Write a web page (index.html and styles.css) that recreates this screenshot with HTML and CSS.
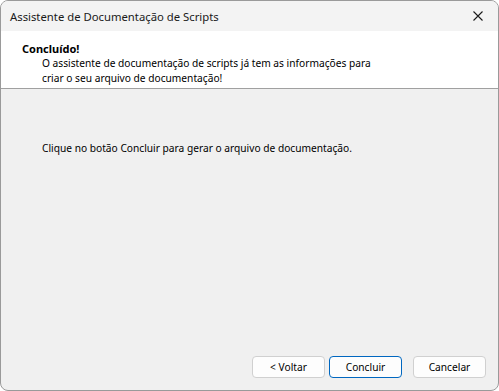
FILE: index.html
```html
<!DOCTYPE html>
<html>
<head>
<meta charset="utf-8">
<link rel="stylesheet" href="styles.css">
</head>
<body>
<div class="window">
  <div class="titlebar">
    <span class="title">Assistente de Documentação de Scripts</span>
    <span class="close">
      <svg width="10" height="10" viewBox="0 0 10 10"><path d="M0.5 0.5 L9.5 9.5 M9.5 0.5 L0.5 9.5" stroke="#1a1a1a" stroke-width="1.1" fill="none"/></svg>
    </span>
  </div>
  <div class="header">
    <div class="heading">Concluído!</div>
    <div class="subtext">O assistente de documentação de scripts já tem as informações para<br>criar o seu arquivo de documentação!</div>
  </div>
  <div class="body">
    <p class="message">Clique no botão Concluir para gerar o arquivo de documentação.</p>
    <div class="buttons">
      <button class="btn">&lt; Voltar</button>
      <button class="btn primary">Concluir</button>
      <button class="btn cancel">Cancelar</button>
    </div>
  </div>
</div>
</body>
</html>
```
FILE: styles.css
```css
html, body {
  margin: 0;
  padding: 0;
  background: #ffffff;
}
body {
  width: 499px;
  height: 391px;
  font-family: "Noto Sans", "Open Sans", sans-serif;
  font-size: 10.2px;
  color: #000;
}
.window {
  box-sizing: border-box;
  width: 499px;
  height: 391px;
  border: 1px solid #9a9a9a;
  border-radius: 8px;
  overflow: hidden;
  display: flex;
  flex-direction: column;
  background: #f0f0f0;
}
.titlebar {
  height: 30px;
  background: #f3f3f3;
  display: flex;
  align-items: center;
  justify-content: space-between;
  padding: 0 15px 0 9px;
  flex-shrink: 0;
}
.title {
  font-size: 11.3px;
  color: #1a1a1a;
}
.close {
  display: flex;
  align-items: center;
}
.header {
  background: #ffffff;
  height: 58px;
  border-bottom: 1px solid #a0a0a0;
  padding: 10px 0 0 21px;
  box-sizing: border-box;
  flex-shrink: 0;
  line-height: 15px;
}
.heading {
  font-weight: bold;
  font-size: 11px;
}
.subtext {
  padding-left: 20px;
}
.body {
  flex: 1;
  display: flex;
  flex-direction: column;
}
.message {
  margin: 52px 0 0 41px;
  line-height: 15px;
}
.buttons {
  margin-top: auto;
  display: flex;
  justify-content: flex-end;
  padding: 0 12px 12px 0;
}
.btn {
  box-sizing: border-box;
  width: 73px;
  height: 22px;
  font-family: inherit;
  font-size: 10.2px;
  background: #fdfdfd;
  border: 1px solid #d0d0d0;
  border-radius: 4px;
  color: #000;
  padding: 0;
  margin-left: 4px;
}
.btn.primary {
  border: 1px solid #0067c0;
}
.btn.cancel {
  margin-left: 11px;
}
```
